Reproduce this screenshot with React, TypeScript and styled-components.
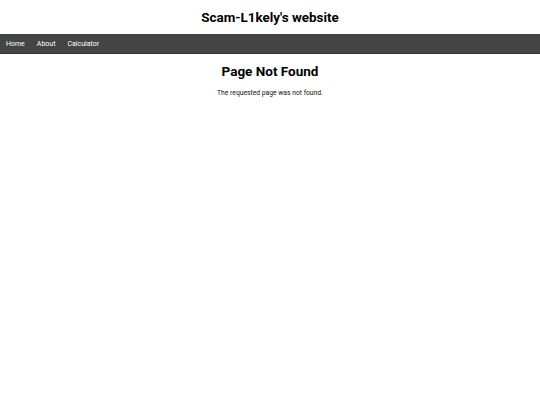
import React from 'react'
import styled, { createGlobalStyle } from 'styled-components'

const GlobalStyle = createGlobalStyle`
  html, body {
    margin: 0;
    padding: 0;
    background: #fff;
    font-family: Roboto, "Liberation Sans", sans-serif;
    color: #000;
  }
`

const HeaderUI = styled.header`
  height: 34px;
  display: flex;
  align-items: center;
  justify-content: center;
`
const TitleUI = styled.h1`
  margin: 0;
  font-size: 13.4px;
  font-weight: 700;
`
const NavUI = styled.nav`
  height: 20px;
  box-sizing: border-box;
  padding: 1px 6px 0;
  background: #444;
  border-bottom: 1px solid #333;
  display: flex;
  align-items: center;
  gap: 12px;
`
const NavLinkUI = styled.a`
  color: #fff;
  font-size: 7px;
  text-decoration: none;
`
const MainUI = styled.main`
  display: flex;
  flex-direction: column;
  align-items: center;
  padding-top: 9px;
`
const HeadingUI = styled.h2`
  margin: 0;
  font-size: 13.5px;
  font-weight: 700;
`
const TextUI = styled.p`
  margin: 10px 0 0;
  font-size: 6.75px;
  color: #111;
`

const links = ['Home', 'About', 'Calculator']

export default function App() {
  return (
    <>
      <GlobalStyle />
      <HeaderUI>
        <TitleUI>Scam-L1kely's website</TitleUI>
      </HeaderUI>
      <NavUI>
        {links.map((l) => (
          <NavLinkUI key={l} href="#">
            {l}
          </NavLinkUI>
        ))}
      </NavUI>
      <MainUI>
        <HeadingUI>Page Not Found</HeadingUI>
        <TextUI>The requested page was not found.</TextUI>
      </MainUI>
    </>
  )
}
